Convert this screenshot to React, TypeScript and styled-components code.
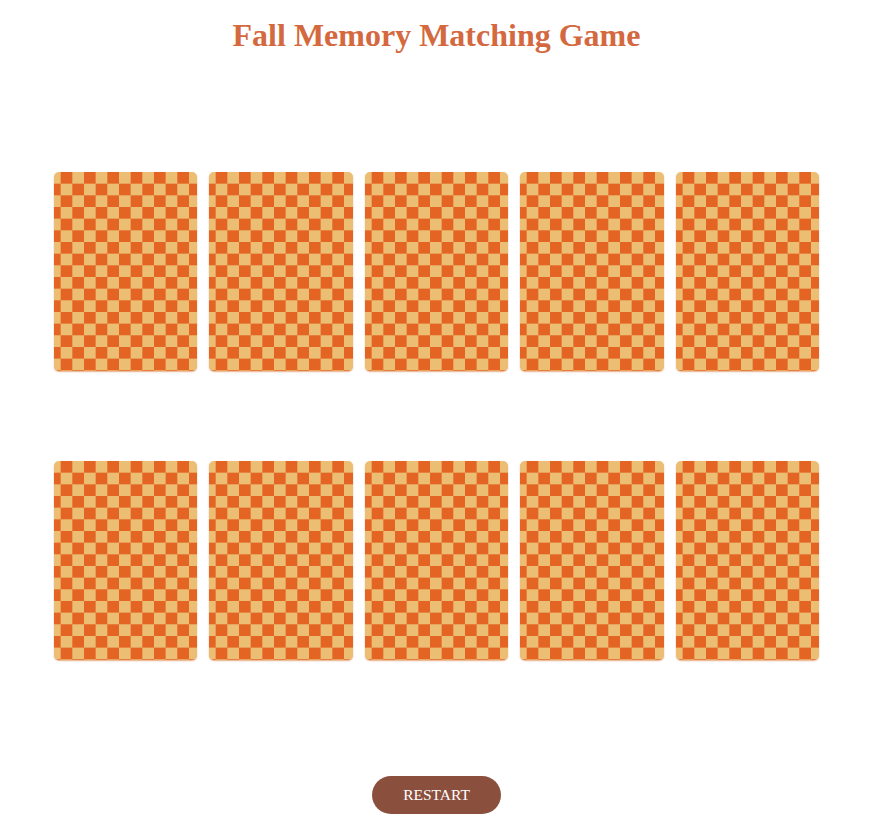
import React from "react";
import styled, { createGlobalStyle } from "styled-components";

const GlobalStyle = createGlobalStyle`
  html, body {
    margin: 0;
    padding: 0;
    background: #ffffff;
    font-family: "Liberation Serif", "Times New Roman", serif;
  }
`;

const Page = styled.div`
  width: 873px;
  display: flex;
  flex-direction: column;
  align-items: center;
`;

const Title = styled.h1`
  margin: 17px 0 0;
  font-size: 32px;
  line-height: 37px;
  font-weight: 700;
  color: #d4693f;
  text-align: center;
`;

const Board = styled.div`
  box-sizing: border-box;
  width: 100%;
  margin-top: 118px;
  padding: 0 54px;
  display: grid;
  grid-template-columns: repeat(5, 1fr);
  column-gap: 12px;
  row-gap: 90px;
`;

const CardBack = styled.div`
  height: 199px;
  border-radius: 5px;
  background-color: #ebbe73;
  background-image: conic-gradient(
    #e46424 0deg 90deg,
    #ebbe73 90deg 180deg,
    #e46424 180deg 270deg,
    #ebbe73 270deg 360deg
  );
  background-size: 23.33px 23.33px;
  background-position: -5px 0;
  box-shadow: 0 1px 1.5px rgba(214, 110, 40, 0.55);
  cursor: pointer;
`;

const RestartButton = styled.button`
  margin-top: 116px;
  width: 129px;
  height: 38px;
  border: none;
  border-radius: 19px;
  background: #8b4f3d;
  color: #ffffff;
  font-family: "Liberation Serif", "Times New Roman", serif;
  font-size: 15.5px;
  cursor: pointer;
`;

export default function App() {
  const cards = Array.from({ length: 10 }, (_, i) => i);
  return (
    <>
      <GlobalStyle />
      <Page>
        <Title>Fall Memory Matching Game</Title>
        <Board>
          {cards.map((i) => (
            <CardBack key={i} />
          ))}
        </Board>
        <RestartButton>RESTART</RestartButton>
      </Page>
    </>
  );
}
